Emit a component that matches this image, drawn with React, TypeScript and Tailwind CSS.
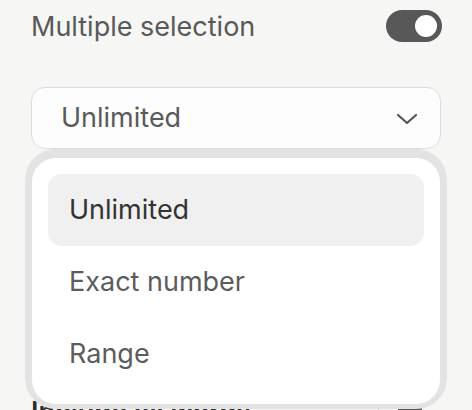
import React, { useState } from 'react';

const OPTIONS = ['Unlimited', 'Exact number', 'Range'];

export default function App() {
  const [multi, setMulti] = useState(true);
  const [value, setValue] = useState('Unlimited');

  return (
    <div
      className="relative w-[472px] h-[410px] overflow-hidden bg-[#f6f6f5] px-[31px]"
      style={{ fontFamily: 'Inter, "Noto Sans", sans-serif' }}
    >
      {/* Multiple selection row */}
      <div className="flex items-center justify-between pt-[10px] h-[42px]">
        <span className="text-[27px] leading-none text-[#595959]">Multiple selection</span>
        <button
          onClick={() => setMulti(m => !m)}
          className={`relative w-[56px] h-[32px] rounded-full mr-[-1px] ${multi ? 'bg-[#585858]' : 'bg-[#d5d5d5]'}`}
        >
          <span className={`absolute top-[5px] w-[22px] h-[22px] rounded-full bg-white ${multi ? 'left-[29px]' : 'left-[5px]'}`} />
        </button>
      </div>

      {/* Select */}
      <div className="mt-[45px] h-[62px] rounded-[14px] border border-[#dcdcdc] bg-[#fdfdfd] flex items-center justify-between pl-[29px] pr-[22px]">
        <span className="text-[27px] text-[#5a5a5a]">{value}</span>
        <svg width="22" height="14" viewBox="0 0 22 14" fill="none" className="mt-[2px]">
          <path d="M2 3l9 8 9-8" stroke="#555" strokeWidth="2.2" strokeLinecap="round" strokeLinejoin="round" />
        </svg>
      </div>

      {/* Content underneath the open menu */}
      <div className="mt-[249px] flex items-start h-[40px]">
        <span className="text-[27px] leading-none font-semibold text-[#2e2e2e] whitespace-nowrap">Include all words</span>
        <div className="ml-auto w-px h-[30px] bg-[#cfcfcf] mr-[19px]" />
        <div className="w-[24px] h-[4px] bg-[#555] mt-[10px] mr-[19px]" />
      </div>

      {/* Dropdown menu */}
      <div className="absolute left-[32px] top-[158px] w-[408px] h-[246px] rounded-[24px] bg-white shadow-[0_-2px_0_7px_#e3e3e3] pt-[16px] px-[16px]">
        {OPTIONS.map(opt => (
          <div
            key={opt}
            onClick={() => setValue(opt)}
            className={`h-[72px] flex items-center pl-[21px] rounded-[14px] text-[27px] ${
              opt === value ? 'bg-[#f0f0f0] text-[#333]' : 'text-[#5c5c5c]'
            }`}
          >
            {opt}
          </div>
        ))}
      </div>
    </div>
  );
}
